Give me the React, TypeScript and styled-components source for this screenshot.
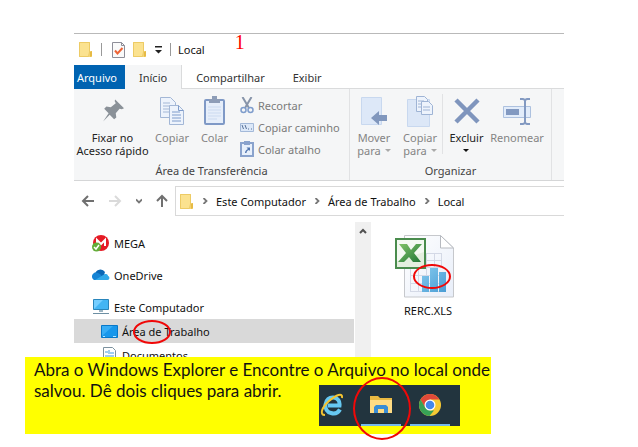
import React from "react";
import styled, { createGlobalStyle } from "styled-components";

const GlobalStyle = createGlobalStyle`
  * { box-sizing: border-box; }
  body { margin: 0; background: #fff; color: #111; font: 11px/13px "Noto Sans", "Open Sans", sans-serif; }
  button { font: inherit; color: inherit; border: 0; padding: 0; background: none; white-space: nowrap; }
  svg { display: block; flex: none; }
`;

const Page = styled.main`
  padding: 33px 0 13px;
`;

const Explorer = styled.section`
  margin: 0 74px;
  overflow: hidden;
  border-top: 1px solid #b9b9b9;
`;

const TitleBar = styled.header`
  display: flex;
  align-items: center;
  height: 31px;
  padding-left: 5px;
`;

const Divider = styled.span`
  width: 1px;
  height: 13px;
  margin: 0 10px 0 8px;
  background: #999;
`;

const ToolButton = styled.button`
  margin-right: 8px;
`;

const FolderTitle = styled.h1`
  margin: 0 30px 0 -3px;
  font-size: 11px;
  font-weight: 400;
`;

const StepNumber = styled.span`
  align-self: flex-start;
  color: #f00;
  font: 20px/16px "Liberation Serif", serif;
`;

const Tabs = styled.nav`
  display: flex;
  height: 24px;
  border-bottom: 1px solid #dadbdc;
`;

const Tab = styled.button<{ $kind?: "file" | "active" }>`
  height: 24px;
  padding: ${(p) => (p.$kind === "file" ? "0 8px 0 3px" : "0 14px")};
  color: ${(p) => (p.$kind === "file" ? "#fff" : "#333")};
  background: ${(p) => (p.$kind === "file" ? "#0063b1" : p.$kind ? "#f5f6f7" : "transparent")};
  border-right: ${(p) => (p.$kind === "active" ? "1px solid #dadbdc" : "0")};
`;

const Ribbon = styled.div`
  display: flex;
  height: 92px;
  background: #f5f6f7;
  border-bottom: 1px solid #d5d6d7;
`;

const Group = styled.section<{ $width: number }>`
  display: flex;
  flex: none;
  flex-direction: column;
  justify-content: space-between;
  width: ${(p) => p.$width}px;
  padding: 5px 0 3px;
  border-right: 1px solid #e1e2e4;
`;

const GroupTools = styled.div`
  display: flex;
  height: 68px;
`;

const GroupName = styled.h2`
  margin: 0;
  font-size: 11px;
  font-weight: 400;
  text-align: center;
  color: #444;
`;

const LargeButton = styled.button<{ $width: number; $muted?: boolean }>`
  display: flex;
  flex: none;
  flex-direction: column;
  align-items: center;
  gap: 3px;
  width: ${(p) => p.$width}px;
  color: ${(p) => (p.$muted ? "#848484" : "#222")};
`;

const IconBox = styled.span`
  display: flex;
  align-items: center;
  justify-content: center;
  height: 34px;
`;

const SmallButtons = styled.div`
  display: flex;
  flex-direction: column;
  padding-left: 4px;
`;

const SmallButton = styled.button`
  display: flex;
  align-items: center;
  gap: 4px;
  height: 22px;
  color: #7b7b7b;
`;

const ToolSplit = styled.span`
  width: 1px;
  height: 60px;
  background: #e1e2e4;
`;

const Caret = styled.span<{ $own?: boolean }>`
  display: inline-block;
  margin: ${(p) => (p.$own ? "5px 0" : "0 0 3px 4px")};
  border: 3px solid transparent;
  border-top-color: ${(p) => (p.$own ? "#111" : "#aaa")};
  border-bottom: 0;
`;

const Navigation = styled.div`
  display: flex;
  align-items: center;
  margin-top: 5px;
`;

const NavButtons = styled.div`
  display: flex;
  align-items: center;
  justify-content: space-between;
  flex: none;
  width: 101px;
  padding: 0 6px 0 7px;
`;

const AddressBar = styled.div`
  display: flex;
  flex: 1;
  align-items: center;
  gap: 8px;
  height: 30px;
  padding-left: 4px;
  border: 1px solid #d9d9d9;
  border-right: 0;
`;

const Crumb = styled.a`
  color: #111;
  text-decoration: none;
  white-space: nowrap;
`;

const Body = styled.div`
  display: grid;
  grid-template-columns: 281px 16px 1fr;
  margin-top: 6px;
`;

const Tree = styled.ul`
  margin: 0;
  padding: 9px 1px 0 0;
  list-style: none;
`;

const TreeItem = styled.li<{ $child?: boolean; $selected?: boolean }>`
  display: flex;
  align-items: center;
  gap: 4px;
  height: 24px;
  margin-bottom: ${(p) => (p.$child ? 0 : 8)}px;
  padding-left: ${(p) => (p.$child ? 26 : 18)}px;
  background: ${(p) => (p.$selected ? "#d9d9d9" : "transparent")};
  &:has(+ [data-child]) { margin-bottom: 0; }
`;

const IconSlot = styled.span`
  display: flex;
  justify-content: center;
  width: 18px;
`;

const Marked = styled.span`
  position: relative;
`;

const Ring = styled.span<{ $x: number; $y: number; $w: number; $h: number }>`
  position: absolute;
  left: ${(p) => p.$x}px;
  top: ${(p) => p.$y}px;
  width: ${(p) => p.$w}px;
  height: ${(p) => p.$h}px;
  border: 2px solid #f00808;
  border-radius: 50%;
`;

const ScrollTrack = styled.div`
  display: flex;
  justify-content: center;
  padding-top: 6px;
  background: #f0f0f0;
`;

const Files = styled.div`
  padding: 12px 0 0 23px;
`;

const File = styled.figure`
  position: relative;
  display: flex;
  flex-direction: column;
  align-items: flex-start;
  gap: 5px;
  margin: 0;
`;

const FileName = styled.figcaption`
  padding-left: 10px;
`;

const Note = styled.aside`
  position: relative;
  margin: -10px 147px 0 25px;
  padding: 2px 0 8px 9px;
  background: #ff0;
  color: #111;
  font: 17px/21px Lato, sans-serif;
  white-space: nowrap;
`;

const NoteLine = styled.p`
  margin: 0;
`;

const NoteRow = styled.div`
  display: flex;
  justify-content: space-between;
  padding-right: 31px;
`;

const Taskbar = styled.div`
  position: relative;
  display: flex;
  gap: 9px;
  width: 141px;
  height: 41px;
  margin-top: 5px;
  background: #22343e;
`;

const TaskButton = styled.button<{ $open?: boolean }>`
  display: flex;
  align-items: center;
  justify-content: center;
  width: ${(p) => (p.$open ? 40 : 33)}px;
  padding-right: ${(p) => (p.$open ? 0 : 7)}px;
  border-bottom: ${(p) => (p.$open ? "2px solid #76b9ed" : "2px solid transparent")};
`;

const Folder = () => (
  <svg width="14" height="17" viewBox="0 0 14 17">
    <path d="M0 1h11v9h2v6H0z" fill="#f6d775" />
    <path d="M11 11l2-1v5l-2 1z" fill="#e6ba45" />
    <path d="M.5 1.500h10V11l-1 4.500h-9z" fill="#fbe28f" stroke="#edcb65" />
  </svg>
);

const CheckPage = () => (
  <svg width="13" height="16" viewBox="0 0 13 16" fill="none">
    <path d="M.5.500h9l3 3v12H.5z" fill="#fafafa" stroke="#8e8e98" />
    <path d="M9.500.500v3h3" stroke="#8e8e98" />
    <path d="M3 8.500l2.500 3L10.500 6" stroke="#ee6436" strokeWidth="2" />
  </svg>
);

const Customize = () => (
  <svg width="7" height="8" viewBox="0 0 7 8"><path d="M0 0h7v1.500H0zM0 4h7L3.500 7.500z" fill="#222" /></svg>
);

const Pin = () => (
  <svg width="22" height="24" viewBox="0 2 20 21">
    <path d="M12 2l8 8-2 1-2-.5-3.500 4 .5 4-2 1.500-4-4L1 22l5-7.500-4-4L4 8.500l4 .5 4.500-3.500-1-2z" fill="#8a9198" />
  </svg>
);

const CopyPages = () => (
  <svg width="25" height="29" viewBox="0 0 25 29" fill="#edf3fc" stroke="#a3b7d6">
    <path d="M.5.500h10l5 5v15H.5z" />
    <path d="M3 6h7M3 9h8M3 12h8M3 15h8" />
    <path d="M9.500 8.500h9l5 5v14h-14z" />
    <path d="M18.500 8.500v5h5M12 15h8M12 18h9M12 21h9M12 24h9" fill="none" stroke="#7f9ccb" />
  </svg>
);

const Clipboard = () => (
  <svg width="21" height="30" viewBox="0 0 21 30">
    <rect x="1" y="4" width="19" height="24" rx="1" fill="#e6eefa" stroke="#7f99c6" strokeWidth="2" />
    <path d="M5 3h3V0h5v3h3v4H5z" fill="#8e9db7" />
    <path d="M4 11h13M4 14h13M4 17h13M4 20h13M4 23h9" stroke="#cbdaf0" />
  </svg>
);

const Scissors = () => (
  <svg width="14" height="17" viewBox="0 0 14 17" fill="none">
    <path d="M2.500 0L9 11M11.500 0L5 11" stroke="#8794a9" strokeWidth="2" />
    <circle cx="3.500" cy="13" r="2.500" stroke="#7f9dcc" strokeWidth="1.500" />
    <circle cx="10.500" cy="13" r="2.500" stroke="#7f9dcc" strokeWidth="1.500" />
  </svg>
);

const PathIcon = () => (
  <svg width="14" height="9" viewBox="0 0 14 9" fill="none">
    <path d="M.5.500h13v8H.5z" fill="#dce8f8" stroke="#a3b9d9" />
    <path d="M2 2l1.500 4M5 2l1.500 4M8 6h1M11 6h1" stroke="#577199" />
  </svg>
);

const Shortcut = () => (
  <svg width="14" height="16" viewBox="0 0 14 16" fill="none">
    <path d="M1 2h12v13H1z" fill="#e8f0fb" stroke="#8aa3cd" strokeWidth="2" />
    <path d="M4 0h6v4H4z" fill="#8aa3cd" />
    <path d="M5 12c0-2 1-3 3-4L6.500 6.500H10V10L9 9c-2 .5-2.500 1.500-2.500 3z" fill="#5276af" />
  </svg>
);

const MoveTo = () => (
  <svg width="27" height="29" viewBox="0 0 27 29">
    <path d="M.5.500h20v27H.5z" fill="#dde8f8" stroke="#c8d8ef" />
    <path d="M10 21l8-7v4h8v6h-8v4z" fill="#8197bd" />
  </svg>
);

const CopyTo = () => (
  <svg width="27" height="31" viewBox="0 0 27 31" fill="#edf3fc" stroke="#9fb4d5">
    <path d="M.5 3.500h22v27H.5z" fill="#dce7f7" stroke="#c8d8ef" />
    <path d="M9.500.500h8l3 3v12h-11z" /><path d="M11 5h6M11 8h6M11 11h6" />
    <path d="M14.500 5.500h7l4 4v9h-11z" /><path d="M16 11h7M16 14h7" />
  </svg>
);

const DeleteIcon = () => (
  <svg width="26" height="26" viewBox="0 0 26 26"><path d="M2 2l22 22M24 2L2 24" stroke="#7f95bd" strokeWidth="4.500" /></svg>
);

const RenameIcon = () => (
  <svg width="29" height="27" viewBox="0 0 29 27" fill="none">
    <path d="M.5 8.500h27v11H.5z" fill="#e2ecfa" stroke="#adc1df" />
    <path d="M3 11h13v6H3z" fill="#8299c1" />
    <path d="M17 1h3l2 1 2-1h3M22 2v23M17 26h3l2-1 2 1h3" stroke="#8299c1" strokeWidth="2" />
  </svg>
);

const Arrow = ({ turn = 0, color = "#707070" }: { turn?: number; color?: string }) => (
  <svg width="14" height="14" viewBox="0 0 14 14" fill="none" stroke={color} strokeWidth="2">
    <path transform={`rotate(${turn} 7 7)`} d="M13 7H2M7 2L2 7l5 5" />
  </svg>
);

const Chevron = ({ turn = 0 }: { turn?: number }) => (
  <svg width="6" height="6" viewBox="0 0 6 6" fill="none" stroke="#777" strokeWidth="1.800">
    <path transform={`rotate(${turn} 3 3)`} d="M1.500 0L4.500 3 1.500 6" />
  </svg>
);

const ScrollUp = () => (
  <svg width="8" height="6" viewBox="0 0 8 6"><path d="M1 5l3-3 3 3" fill="none" stroke="#505050" strokeWidth="2" /></svg>
);

const Mega = () => (
  <svg width="18" height="18" viewBox="0 0 18 18">
    <circle cx="9" cy="9" r="8" fill="#e51b25" />
    <path d="M5 12V6l4 4 4-4v6" fill="none" stroke="#fff" strokeWidth="2" />
    <circle cx="4.500" cy="13" r="4.500" fill="#63ad38" />
    <path d="M2 13l2 2 3-4" fill="none" stroke="#fff" strokeWidth="1.500" />
  </svg>
);

const OneDrive = () => (
  <svg width="18" height="12" viewBox="0 0 18 12">
    <path d="M3 5a5.500 5.500 0 0 1 10-2l-2 6H1z" fill="#0b67b5" />
    <path d="M2 11a4 4 0 0 1 0-7c2-1 5 0 7 2l3 5z" fill="#1684d5" />
    <path d="M3 11l9-5.500c1-1 4-.5 4 1.500 2 .5 2 4-.5 4z" fill="#31a9e9" />
  </svg>
);

const Computer = () => (
  <svg width="18" height="16" viewBox="0 0 18 16">
    <path d="M1.500.500h15v10h-15z" fill="#43b5f4" stroke="#2985bb" />
    <path d="M2 10V1h9z" fill="#75ceff" /><path d="M7 11h4v2H7z" fill="#9bb4c2" /><path d="M1 14.500h16" stroke="#6d8fa3" />
  </svg>
);

const Desktop = () => (
  <svg width="17" height="13" viewBox="0 0 17 13">
    <path d="M.5.500h16v12H.5z" fill="#1897eb" stroke="#0878c8" />
    <path d="M1 11L12 1H1z" fill="#38adf5" /><path d="M2 11.500h2M12 11.500h3" stroke="#b7e5ff" />
  </svg>
);

const DocumentIcon = () => (
  <svg width="13" height="16" viewBox="0 0 13 16" fill="none">
    <path d="M.5.500h9l3 3v12H.5z" fill="#fff" stroke="#7d929f" />
    <path d="M2 5h3M6 3v4M7 6h4M2 9h9M2 12h9" stroke="#429ce0" />
  </svg>
);

const Spreadsheet = () => (
  <svg width="60" height="65" viewBox="0 0 60 65" role="img" aria-label="Planilha">
    <defs>
      <linearGradient id="paper" x2="1" y2="1"><stop stopColor="#fff" /><stop offset="1" stopColor="#e8eef9" /></linearGradient>
      <linearGradient id="bars" x2="1" y2="1"><stop stopColor="#82c8ed" /><stop offset="1" stopColor="#4a9dd4" /></linearGradient>
      <linearGradient id="cross" x2="1" y2="1"><stop stopColor="#83c369" /><stop offset="1" stopColor="#217737" /></linearGradient>
    </defs>
    <path d="M10.500 1.500h36L59.500 14v49h-49z" fill="url(#paper)" stroke="#c6c8cc" />
    <path d="M46.500 1.500V14h13z" fill="#fff" stroke="#b7bac0" />
    <path d="M16.500 19v39M24.500 19v39M32.500 19v39M40.500 19v39M47.500 19v14M16 19.500h31M16 26.500h31M16 33.500h31M16 41.500h31M16 49.500h31M16 57.500h31" stroke="#d4d9e6" />
    <path d="M28 42h7v16h-7zM36 34h8v24h-8zM45 38h7v20h-7z" fill="url(#bars)" />
    <path d="M2 5h29v29H2z" fill="#e4efdf" stroke="#4a8c4d" strokeWidth="2" />
    <path d="M3 6h27v12L3 27z" fill="#fff" opacity=".6" />
    <path d="M5 10h8l4 6 5-6h6l-8 9 7 9h-8l-4-5-5 5H4l8-9z" fill="url(#cross)" />
  </svg>
);

const ExplorerFolder = () => (
  <svg width="22" height="19" viewBox="0 0 22 19">
    <path d="M0 1h8l2 2h12v15H0z" fill="#e9b942" /><path d="M0 5h22v13H0z" fill="#ffdc84" />
    <path d="M4 18v-6l2-2h10l2 2v6h-4v-4H8v4z" fill="#398dd5" />
  </svg>
);

const InternetExplorer = () => (
  <svg width="24" height="24" viewBox="0 0 24 24" fill="none">
    <path d="M20 16.500c-2 3.500-5.500 4.500-9 3.500-4-1-6-4.500-5.500-8.500C6 7 9.500 4 13.500 4.500c4.500.500 6.500 4 6 8H8" stroke="#66c9f2" strokeWidth="4" />
    <path d="M5 22c-6 0-3-8 4-14S23-1 22 5" stroke="#f4c431" strokeWidth="2" />
  </svg>
);

const Chrome = () => (
  <svg width="22" height="22" viewBox="0 0 22 22">
    <circle cx="11" cy="11" r="11" fill="#f6c934" />
    <path d="M1.500 5.500A11 11 0 0 1 20.500 5.500H11L6 14z" fill="#df4939" />
    <path d="M1.500 5.500L6.300 13.800 11 16.500h4L10.500 22A11 11 0 0 1 1.500 5.500z" fill="#37a256" />
    <circle cx="11" cy="11" r="5.500" fill="#fff" /><circle cx="11" cy="11" r="4.300" fill="#4387ec" />
  </svg>
);

export default function App() {
  return (
    <Page>
      <GlobalStyle />
      <Explorer>
        <TitleBar>
          <Folder />
          <Divider />
          <ToolButton aria-label="Propriedades"><CheckPage /></ToolButton>
          <ToolButton aria-label="Nova pasta"><Folder /></ToolButton>
          <button aria-label="Personalizar"><Customize /></button>
          <Divider />
          <FolderTitle>Local</FolderTitle>
          <StepNumber>1</StepNumber>
        </TitleBar>
        <Tabs>
          <Tab $kind="file">Arquivo</Tab>
          <Tab $kind="active">Início</Tab>
          <Tab>Compartilhar</Tab>
          <Tab>Exibir</Tab>
        </Tabs>
        <Ribbon>
          <Group $width={276}>
            <GroupTools>
              <LargeButton $width={77}><IconBox><Pin /></IconBox><span>Fixar no<br />Acesso rápido</span></LargeButton>
              <LargeButton $width={42} $muted><IconBox><CopyPages /></IconBox>Copiar</LargeButton>
              <LargeButton $width={43} $muted><IconBox><Clipboard /></IconBox>Colar</LargeButton>
              <SmallButtons>
                <SmallButton><Scissors />Recortar</SmallButton>
                <SmallButton><PathIcon />Copiar caminho</SmallButton>
                <SmallButton><Shortcut />Colar atalho</SmallButton>
              </SmallButtons>
            </GroupTools>
            <GroupName>Área de Transferência</GroupName>
          </Group>
          <Group $width={202}>
            <GroupTools>
              <LargeButton $width={48} $muted><IconBox><MoveTo /></IconBox><span>Mover<br />para<Caret /></span></LargeButton>
              <LargeButton $width={44} $muted><IconBox><CopyTo /></IconBox><span>Copiar<br />para<Caret /></span></LargeButton>
              <ToolSplit />
              <LargeButton $width={47}><IconBox><DeleteIcon /></IconBox><span>Excluir<br /><Caret $own /></span></LargeButton>
              <LargeButton $width={54} $muted><IconBox><RenameIcon /></IconBox>Renomear</LargeButton>
            </GroupTools>
            <GroupName>Organizar</GroupName>
          </Group>
        </Ribbon>
        <Navigation>
          <NavButtons>
            <button aria-label="Voltar"><Arrow /></button>
            <button aria-label="Avançar"><Arrow turn={180} color="#dadada" /></button>
            <button aria-label="Recentes"><Chevron turn={90} /></button>
            <button aria-label="Acima"><Arrow turn={90} /></button>
          </NavButtons>
          <AddressBar>
            <Folder />
            <Chevron />
            <Crumb href="#computador">Este Computador</Crumb>
            <Chevron />
            <Crumb href="#trabalho">Área de Trabalho</Crumb>
            <Chevron />
            <Crumb href="#local">Local</Crumb>
          </AddressBar>
        </Navigation>
        <Body>
          <Tree>
            <TreeItem><Mega />MEGA</TreeItem>
            <TreeItem><OneDrive />OneDrive</TreeItem>
            <TreeItem><Computer />Este Computador</TreeItem>
            <TreeItem $child $selected data-child>
              <IconSlot><Desktop /></IconSlot>
              <Marked>Área de Trabalho<Ring $x={11} $y={-5} $w={38} $h={24} /></Marked>
            </TreeItem>
            <TreeItem $child data-child><IconSlot><DocumentIcon /></IconSlot>Documentos</TreeItem>
          </Tree>
          <ScrollTrack><ScrollUp /></ScrollTrack>
          <Files>
            <File>
              <Spreadsheet />
              <FileName>RERC.XLS</FileName>
              <Ring $x={19} $y={30} $w={38} $h={25} />
            </File>
          </Files>
        </Body>
      </Explorer>
      <Note>
        <NoteLine>Abra o Windows Explorer e Encontre o Arquivo no local onde</NoteLine>
        <NoteRow>
          <NoteLine>salvou. Dê dois cliques para abrir.</NoteLine>
          <Taskbar>
            <TaskButton aria-label="Internet Explorer"><InternetExplorer /></TaskButton>
            <TaskButton $open aria-label="Explorador de Arquivos"><ExplorerFolder /></TaskButton>
            <TaskButton $open aria-label="Chrome"><Chrome /></TaskButton>
            <Ring $x={34} $y={-8} $w={58} $h={63} />
          </Taskbar>
        </NoteRow>
      </Note>
    </Page>
  );
}
